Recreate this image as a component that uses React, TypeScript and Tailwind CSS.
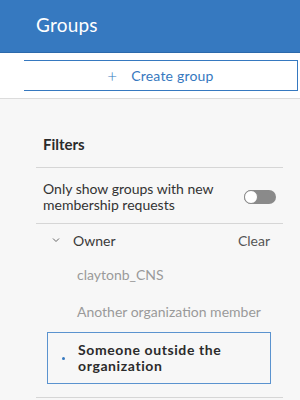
import React from 'react';

const font = { fontFamily: 'Lato, "Noto Sans", sans-serif' };

const App = () => {
  return (
    <div className="w-[300px] h-[400px] overflow-hidden bg-[#f7f7f7]" style={font}>
      <header className="h-[53px] bg-[#3679c0] border-b border-[#2c69ab] flex items-center pl-[36px] pb-[2px]">
        <h1 className="text-[19px] text-white font-normal tracking-[0.2px]">Groups</h1>
      </header>

      <div className="h-[46px] bg-white border-b border-[#dcdcdc] pl-[24px] pr-[2px] pt-[7px]">
        <button className="w-full h-[31px] border-t border-b border-r border-[#3679c0] flex items-center justify-center gap-[14px] text-[#3679c0] text-[14px]">
          <span className="text-[17px] leading-none font-light">+</span>
          <span className="tracking-[0.2px]">Create group</span>
        </button>
      </div>

      <div className="pl-[36px] pr-[17px]">
        <div className="h-[69px] border-b border-[#d6d6d6] flex items-end pb-[13px] pl-[7px]">
          <h2 className="text-[15px] leading-[20px] font-bold text-[#2b2b2b]">Filters</h2>
        </div>

        <div className="border-b border-[#d6d6d6] pt-[13px] pb-[10px] pl-[7px] pr-[7px] flex items-center justify-between">
          <p className="text-[14px] leading-[16px] text-[#333]">
            Only show groups with new
            <br />
            membership requests
          </p>
          <div className="w-[32px] h-[14px] rounded-full bg-[#8a8a8a] relative">
            <div className="absolute left-0 top-0 w-[14px] h-[14px] rounded-full bg-white border border-[#8a8a8a]" />
          </div>
        </div>

        <div className="h-[32px] flex items-center pl-[16px] pr-[13px]">
          <svg width="8" height="6" viewBox="0 0 8 6" className="mr-[13px]">
            <polyline points="1,1.5 4,4.5 7,1.5" fill="none" stroke="#666" strokeWidth="1" />
          </svg>
          <span className="text-[14px] text-[#3a3a3a] flex-1">Owner</span>
          <span className="text-[14px] text-[#555]">Clear</span>
        </div>

        <div className="pl-[11px] pr-[12px]">
          <div className="h-[37px] flex items-center pl-[30px] text-[14px] text-[#9a9a9a]">claytonb_CNS</div>
          <div className="h-[37px] flex items-center pl-[30px] text-[14px] text-[#9a9a9a]">Another organization member</div>
          <div className="mt-[2px] border-[1.5px] border-[#5b93cf] py-[9px] flex items-center">
            <span className="w-[3px] h-[3px] rounded-full bg-[#3679c0] ml-[14px] mr-[13px]" />
            <span className="text-[14px] leading-[16px] font-bold tracking-[0.6px] text-[#2b2b2b]">
              Someone outside the
              <br />
              organization
            </span>
          </div>
        </div>

        <div className="mt-[13px] border-b border-[#d6d6d6]" />
      </div>
    </div>
  );
};

export default App;
